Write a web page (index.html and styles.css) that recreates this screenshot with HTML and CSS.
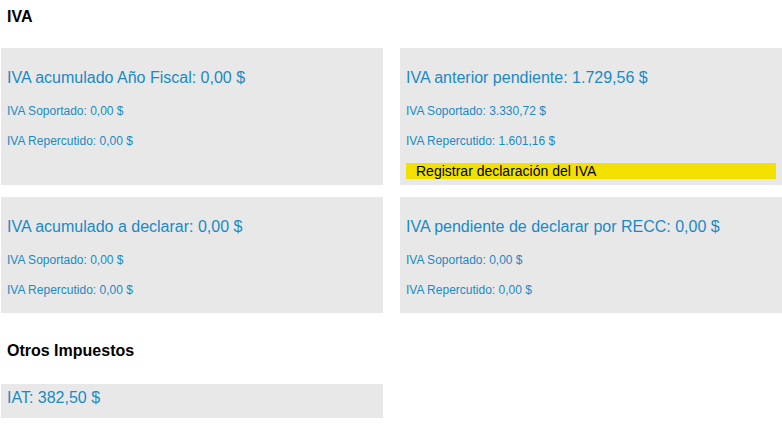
FILE: index.html
```html
<!DOCTYPE html>
<html lang="es">
<head>
<meta charset="utf-8">
<title>IVA</title>
<link rel="stylesheet" href="styles.css">
</head>
<body>
<div class="page">
  <h2 class="section-title">IVA</h2>
  <div class="grid">
    <div class="card">
      <div class="card-title">IVA acumulado Año Fiscal: 0,00 $</div>
      <p class="line">IVA Soportado: 0,00 $</p>
      <p class="line">IVA Repercutido: 0,00 $</p>
    </div>
    <div class="card">
      <div class="card-title">IVA anterior pendiente: 1.729,56 $</div>
      <p class="line">IVA Soportado: 3.330,72 $</p>
      <p class="line">IVA Repercutido: 1.601,16 $</p>
      <div class="action">Registrar declaración del IVA</div>
    </div>
    <div class="card">
      <div class="card-title">IVA acumulado a declarar: 0,00 $</div>
      <p class="line">IVA Soportado: 0,00 $</p>
      <p class="line">IVA Repercutido: 0,00 $</p>
    </div>
    <div class="card">
      <div class="card-title">IVA pendiente de declarar por RECC: 0,00 $</div>
      <p class="line">IVA Soportado: 0,00 $</p>
      <p class="line">IVA Repercutido: 0,00 $</p>
    </div>
  </div>
  <h2 class="section-title section-title--second">Otros Impuestos</h2>
  <div class="grid">
    <div class="card card--compact">
      <div class="card-title">IAT: 382,50 $</div>
    </div>
  </div>
</div>
</body>
</html>
```

FILE: styles.css
```css
html, body {
  margin: 0;
  padding: 0;
  background: #ffffff;
}

body {
  font-family: "Liberation Sans", Arial, sans-serif;
  color: #000000;
}

.page {
  padding: 8px 0 12px 1px;
}

.section-title {
  margin: 0;
  padding-left: 6px;
  font-size: 16px;
  line-height: 18px;
  font-weight: bold;
}

.page > .section-title:first-child {
  margin-bottom: 22px;
}

.section-title--second {
  margin-top: 29px;
  margin-bottom: 24px;
}

.grid {
  display: grid;
  grid-template-columns: 382px 382px;
  column-gap: 17px;
  row-gap: 12px;
}

.card {
  background: #e8e8e8;
  padding: 20px 6px 1px;
  color: #1a8ac6;
}

.card-title {
  font-size: 16px;
  line-height: 19px;
  margin-bottom: 17px;
}

.line {
  margin: 0 0 15.5px;
  font-size: 12px;
  line-height: 14px;
}

.action {
  background: #f2e000;
  color: #000000;
  font-size: 14px;
  line-height: 16px;
  padding-left: 10px;
  margin-bottom: 5px;
}

.card--compact {
  padding: 4px 6px 11px;
}

.card--compact .card-title {
  margin-bottom: 0;
}
```
